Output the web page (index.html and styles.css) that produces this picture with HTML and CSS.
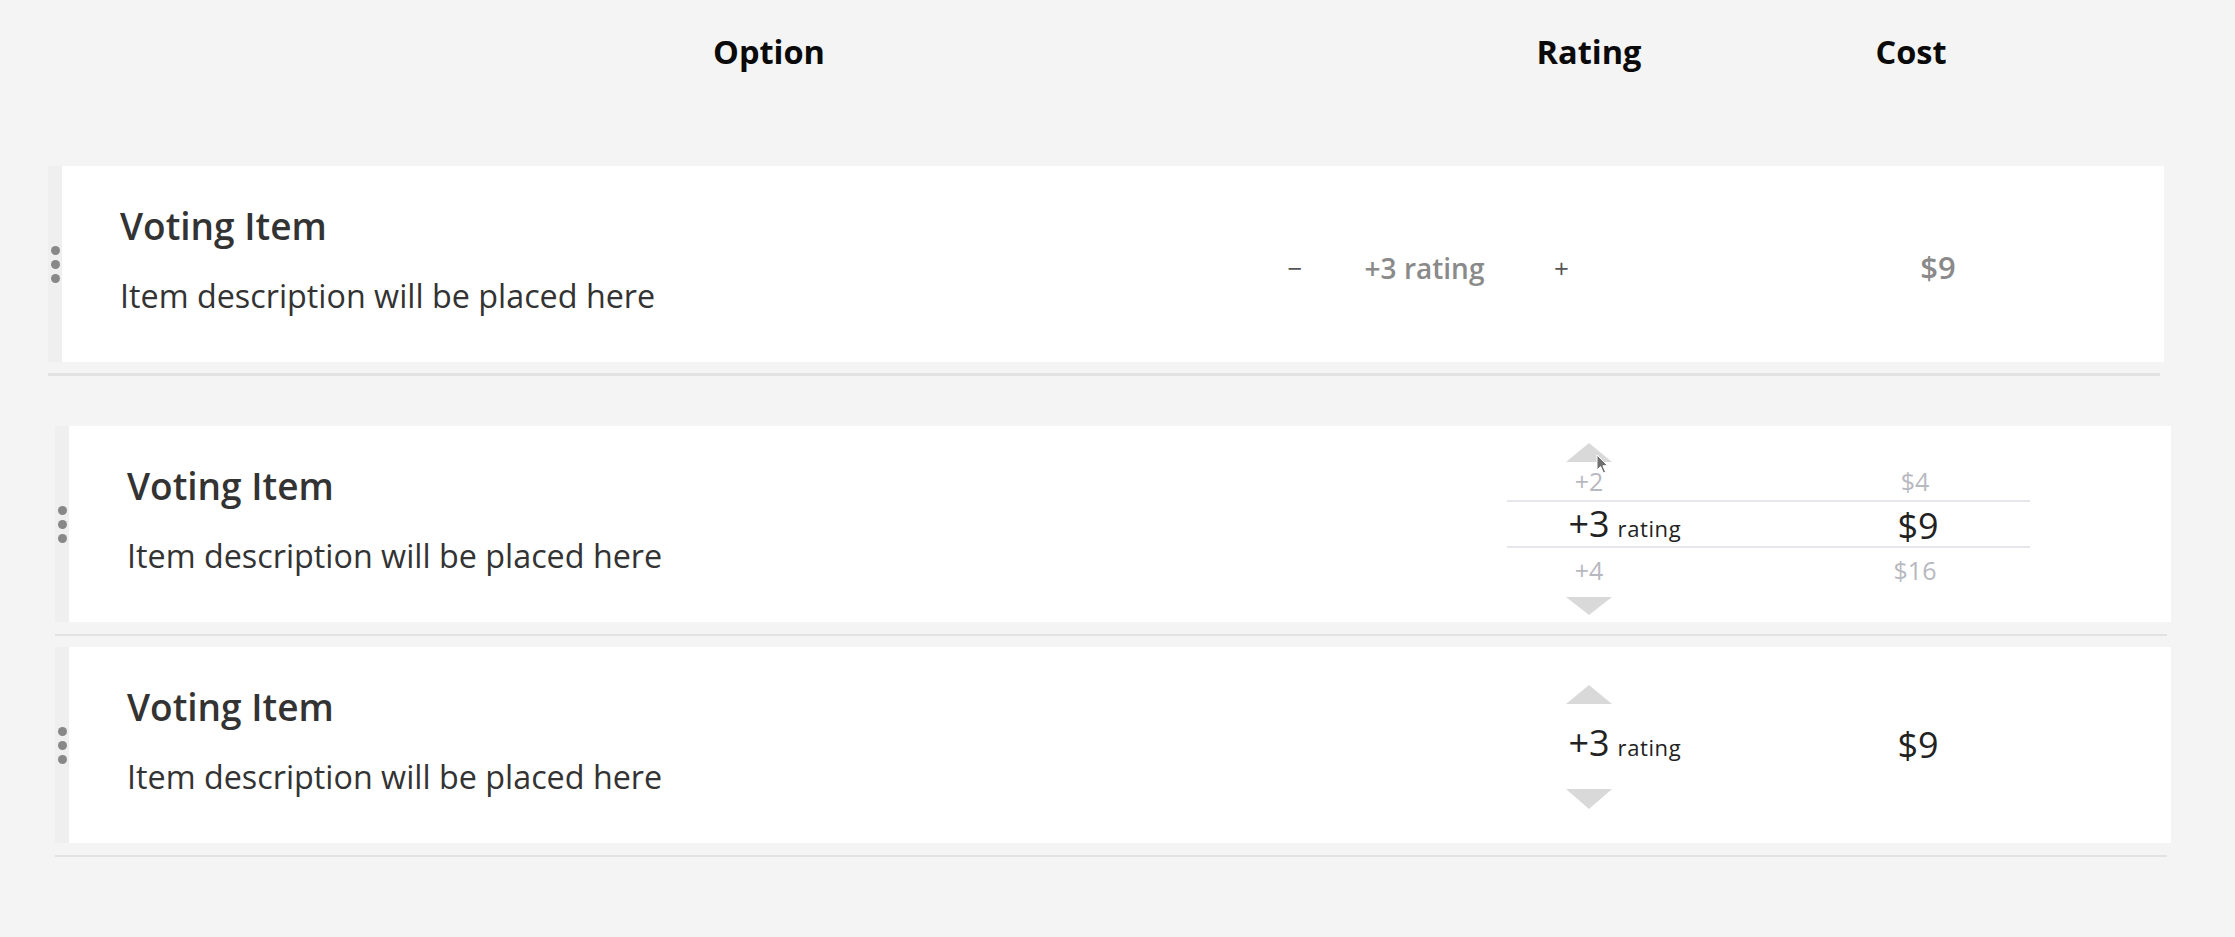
FILE: index.html
```html
<!DOCTYPE html>
<html lang="en">
<head>
<meta charset="utf-8">
<title>Voting</title>
<link rel="stylesheet" href="styles.css">
</head>
<body>
<div class="header">
  <div class="h-option">Option</div>
  <div class="h-rating">Rating</div>
  <div class="h-cost">Cost</div>
</div>

<div class="list">
  <div class="item item-first">
    <div class="card card-stepper">
      <div class="handle"><span class="dot"></span><span class="dot"></span><span class="dot"></span></div>
      <div class="option">
        <div class="title">Voting Item</div>
        <div class="desc">Item description will be placed here</div>
      </div>
      <div class="stepper">
        <div class="step-btn step-minus">&minus;</div>
        <div class="step-label">+3 rating</div>
        <div class="step-btn step-plus">+</div>
      </div>
      <div class="step-cost">$9</div>
    </div>
    <div class="rule"></div>
  </div>

  <div class="item">
    <div class="card">
      <div class="handle"><span class="dot"></span><span class="dot"></span><span class="dot"></span></div>
      <div class="option">
        <div class="title">Voting Item</div>
        <div class="desc">Item description will be placed here</div>
      </div>
      <div class="picker picker-open">
        <div class="arrow-wrap"><span class="arrow arrow-up"></span></div>
        <div class="prow faint"><span class="pr">+2</span><span class="pc">$4</span></div>
        <div class="prow main"><span class="pr"><span class="num">+3</span><span class="unit"><span>rating</span></span></span><span class="pc">$9</span></div>
        <div class="prow faint faint-bottom"><span class="pr">+4</span><span class="pc">$16</span></div>
        <div class="arrow-wrap arrow-wrap-down"><span class="arrow arrow-down"></span></div>
        <svg class="cursor" width="13" height="21" viewBox="0 0 13 21"><path d="M1 1 L1 16 L4.6 12.6 L7.4 19 L9.6 18 L6.9 11.8 L11.6 11.6 Z" fill="#6f6f6f" stroke="#ffffff" stroke-width="1"/></svg>
      </div>
    </div>
    <div class="rule"></div>
  </div>

  <div class="item">
    <div class="card">
      <div class="handle"><span class="dot"></span><span class="dot"></span><span class="dot"></span></div>
      <div class="option">
        <div class="title">Voting Item</div>
        <div class="desc">Item description will be placed here</div>
      </div>
      <div class="picker picker-closed">
        <div class="arrow-wrap"><span class="arrow arrow-up"></span></div>
        <div class="prow main"><span class="pr"><span class="num">+3</span><span class="unit"><span>rating</span></span></span><span class="pc">$9</span></div>
        <div class="arrow-wrap"><span class="arrow arrow-down"></span></div>
      </div>
    </div>
    <div class="rule"></div>
  </div>
</div>
</body>
</html>
```

FILE: styles.css
```css
* { box-sizing: border-box; }

html, body {
  margin: 0;
  padding: 0;
  background: #f4f4f4;
  font-family: "Open Sans", "DejaVu Sans", sans-serif;
  color: #333;
}

.header {
  display: flex;
  padding: 30px 0 0 48px;
  height: 74px;
  font-size: 32.5px;
  line-height: 44px;
  font-weight: 700;
  color: #0a0a0a;
}
.h-option { width: 1442px; text-align: center; }
.h-rating { width: 164px; margin-left: 17px; text-align: center; }
.h-cost { width: 100px; margin-left: 190px; text-align: center; }

.list {
  margin-top: 92px;
  padding-left: 48px;
}

.item { width: 2116px; }
.item + .item { margin-left: 7px; }
.item-first { margin-bottom: 50px; }
.item:not(.item-first) + .item { margin-top: 11px; }

.card {
  display: flex;
  height: 196px;
  background: #ffffff;
  padding-right: 141px;
}

.rule {
  margin-top: 11px;
  width: 2112px;
  height: 3px;
  background: #e2e2e2;
}
.item:not(.item-first) .rule { margin-top: 12px; height: 2px; }

.handle {
  width: 14px;
  flex: none;
  background: #efefef;
  display: flex;
  flex-direction: column;
  align-items: center;
  justify-content: center;
  gap: 5px;
}
.dot {
  width: 9px;
  height: 9px;
  border-radius: 50%;
  background: #888888;
}

.option {
  flex: 1;
  padding: 35px 0 0 58px;
}
.title {
  font-size: 37px;
  line-height: 50px;
  font-weight: 600;
  color: #333;
}
.desc {
  margin-top: 22px;
  font-size: 32.3px;
  line-height: 44px;
  color: #333;
}

/* first card: stepper variant */
.card-stepper { padding-right: 176px; }
.stepper {
  display: flex;
  align-items: center;
  padding-top: 8px;
}
.step-btn {
  text-align: center;
  font-size: 26px;
  color: #555;
}
.step-minus { width: 60px; }
.step-plus { width: 75px; }
.step-label {
  width: 199px;
  text-align: center;
  font-size: 28px;
  font-weight: 600;
  color: #8a8a8a;
}
.step-cost {
  width: 100px;
  margin-left: 289px;
  align-self: center;
  padding-top: 6px;
  text-align: center;
  font-size: 31px;
  font-weight: 600;
  color: #8a8a8a;
}

/* picker variant */
.picker {
  position: relative;
  width: 523px;
  flex: none;
  display: flex;
  flex-direction: column;
}
.picker-open { padding-top: 17px; }
.picker-closed { padding-top: 38px; }

.arrow-wrap {
  width: 164px;
  height: 19px;
  display: flex;
  justify-content: center;
}
.arrow-wrap-down { margin-top: 5px; }
.arrow {
  width: 0;
  height: 0;
  border-left: 23px solid transparent;
  border-right: 23px solid transparent;
}
.arrow-up { border-bottom: 19px solid #d9d9d9; }
.arrow-down { border-top: 18px solid #d9d9d9; }

.prow {
  display: grid;
  grid-template-columns: 164px 194px 100px 65px;
  align-items: center;
}
.pr { grid-column: 1; display: flex; justify-content: center; align-items: baseline; }
.pc { grid-column: 3; text-align: center; }

.faint {
  height: 38px;
  font-size: 25px;
  line-height: 38px;
  color: #b8b8c0;
}
.faint-bottom { height: 44px; line-height: 44px; }

.main {
  height: 48px;
  border-top: 2px solid #e6e6ec;
  border-bottom: 2px solid #e6e6ec;
  font-size: 36px;
  line-height: 44px;
  color: #222;
}
.main .pc { padding-left: 6px; }
.picker-closed .main {
  height: 84px;
  border: none;
  line-height: 76px;
  padding-bottom: 8px;
}
.picker-closed .arrow-wrap { height: 20px; }
.picker-closed .arrow-down { border-top-width: 20px; }

.unit {
  width: 0;
  white-space: nowrap;
}
.unit span {
  display: inline-block;
  padding-left: 8px;
  font-size: 22px;
  letter-spacing: 0.6px;
}

.cursor {
  position: absolute;
  left: 89px;
  top: 28px;
}
```
